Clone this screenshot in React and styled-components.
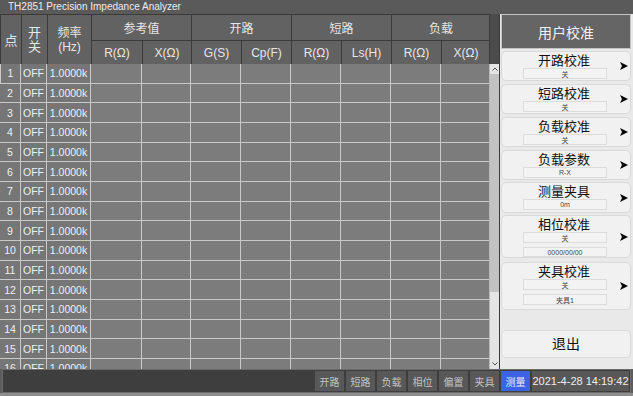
import React from 'react';
import styled, {createGlobalStyle} from 'styled-components';

const GlobalStyle = createGlobalStyle`
    body{
        margin:0;
        background:#5c5c5c;
        font-family:"Liberation Sans","Noto Sans CJK SC",sans-serif;
    }
`;

const Screen = styled.div`
    width:633px;
    height:396px;
    background:#5c5c5c;
    display:flex;
    flex-direction:column;
    overflow:hidden;
    position:relative;
`;

const TitleBar = styled.div`
    height:14px;
    line-height:14px;
    padding-left:8px;
    font-size:10px;
    color:#ececec;
    background:#5a5a5a;
`;

const Main = styled.div`
    display:flex;
    height:355px;
`;

const TableArea = styled.div`
    width:500px;
    display:flex;
    flex-direction:column;
    background:#4b4b4b;
    border-right:1px solid #3a3a3a;
    box-sizing:border-box;
`;

const cols = '21px 26px 44px 51px 49px 50px 50px 50px 50px 50px 49px';

const Header = styled.div`
    width:490px;
    height:50px;
    display:grid;
    grid-template-columns:${cols};
    grid-template-rows:26px 24px;
    background:#626262;
    border-right:1px solid #3a3a3a;
    border-top:1px solid #3a3a3a;
    box-sizing:border-box;
`;

const HeadCell = styled.div`
    grid-column:${p => p.col};
    grid-row:${p => p.row};
    display:flex;
    align-items:center;
    justify-content:center;
    flex-direction:column;
    color:#e6e6e6;
    font-size:${p => p.size || 12}px;
    line-height:${p => p.lh || 'normal'};
    border-left:1px solid #3a3a3a;
    border-bottom:1px solid #3a3a3a;
    box-sizing:border-box;
    text-align:center;
`;

const BodyWrap = styled.div`
    flex:1;
    display:flex;
    overflow:hidden;
`;

const Body = styled.div`
    width:490px;
    display:grid;
    grid-template-columns:${cols};
    grid-auto-rows:19.67px;
    align-content:start;
    overflow:hidden;
    background:#7b7b7b;
`;

const Cell = styled.div`
    background:${p => p.fixed ? '#767676' : '#7c7c7c'};
    border-right:1px solid #c9c9c9;
    border-bottom:1px solid #c9c9c9;
    box-sizing:border-box;
    color:#f0f0f0;
    font-size:10.5px;
    display:flex;
    align-items:center;
    justify-content:center;
    &:first-child{ border-left:1px solid #c9c9c9; }
`;

const ScrollBar = styled.div`
    width:9px;
    background:#e4e4e4;
    display:flex;
    flex-direction:column;
    align-items:center;
    border-left:1px solid #b8b8b8;
`;

const Arrow = styled.div`
    height:10px;
    display:flex;
    align-items:center;
    justify-content:center;
`;

const Thumb = styled.div`
    width:9px;
    height:218px;
    background:#c2c2c2;
`;

const Track = styled.div`
    flex:1;
`;

const Side = styled.div`
    width:133px;
    background:#e9e9e9;
    padding:0 2px 0 1px;
    box-sizing:border-box;
    display:flex;
    flex-direction:column;
`;

const SideTitle = styled.div`
    height:35px;
    background:#656565;
    border:1px solid #c4c4c4;
    color:#f2f2f2;
    font-size:14px;
    display:flex;
    align-items:center;
    justify-content:center;
    margin-bottom:2px;
    box-sizing:border-box;
`;

const Btn = styled.div`
    height:${p => p.h}px;
    margin-top:${p => p.mt || 0}px;
    background:#f1f1f1;
    border:1px solid #d9d9d9;
    border-radius:5px;
    box-sizing:border-box;
    display:flex;
    flex-direction:column;
    align-items:center;
    justify-content:${p => p.center ? 'center' : 'flex-start'};
    padding-top:${p => p.center ? 0 : 1}px;
    position:relative;
`;

const BtnLabel = styled.div`
    font-size:${p => p.big ? 14 : 13}px;
    color:#111;
    line-height:15px;
    margin-right:${p => p.big ? 0 : 4}px;
`;

const Value = styled.div`
    width:84px;
    height:11px;
    margin-top:${p => p.mt || 0}px;
    margin-right:2px;
    border:1px solid #dcdcdc;
    background:#f3f3f3;
    font-size:7px;
    color:#444;
    display:flex;
    align-items:center;
    justify-content:center;
    box-sizing:border-box;
`;

const Pointer = styled.svg`
    position:absolute;
    right:2px;
    top:50%;
    transform:translateY(-50%);
`;

const StatusBar = styled.div`
    height:24px;
    margin:0 2px;
    background:#3e3e3e;
    border:1px solid #6c6c6c;
    box-sizing:border-box;
    display:flex;
    align-items:center;
    justify-content:flex-end;
    gap:2px;
    padding-right:1px;
`;

const StatusBtn = styled.div`
    width:${p => p.w || 29}px;
    height:20px;
    background:${p => p.active ? '#3d63e4' : '#585858'};
    color:${p => p.active ? '#e8ecff' : p.date ? '#eeeeee' : '#c2c2c2'};
    font-size:${p => p.date ? 11 : 10}px;
    display:flex;
    align-items:center;
    justify-content:center;
`;

const BottomStrip = styled.div`
    flex:1;
    background:#8e8e8e;
`;

const rows = Array.from({length: 17}, (_, i) => i + 1);

const SideButton = ({label, values = [], h, mt}) => (
    <Btn h={h} mt={mt}>
        <BtnLabel>{label}</BtnLabel>
        {values.map((v, i) => <Value key={i} mt={i ? 4 : 0}>{v}</Value>)}
        <Pointer width="8" height="8" viewBox="0 0 8 8">
            <path d="M0 0 L8 4 L0 8 L2 4 Z" fill="#000" />
        </Pointer>
    </Btn>
);

const App = () => (
    <Screen>
        <GlobalStyle />
        <TitleBar>TH2851 Precision Impedance Analyzer</TitleBar>
        <Main>
            <TableArea>
                <Header>
                    <HeadCell col="1" row="1 / 3" size={13}>点</HeadCell>
                    <HeadCell col="2" row="1 / 3" size={13} lh="14px"><span>开</span><span>关</span></HeadCell>
                    <HeadCell col="3" row="1 / 3" lh="14px"><span>频率</span><span>(Hz)</span></HeadCell>
                    <HeadCell col="4 / 6" row="1">参考值</HeadCell>
                    <HeadCell col="6 / 8" row="1">开路</HeadCell>
                    <HeadCell col="8 / 10" row="1">短路</HeadCell>
                    <HeadCell col="10 / 12" row="1">负载</HeadCell>
                    {['R(Ω)', 'X(Ω)', 'G(S)', 'Cp(F)', 'R(Ω)', 'Ls(H)', 'R(Ω)', 'X(Ω)'].map((t, i) => (
                        <HeadCell key={i} col={String(i + 4)} row="2">{t}</HeadCell>
                    ))}
                </Header>
                <BodyWrap>
                    <Body>
                        {rows.map(n => (
                            <React.Fragment key={n}>
                                <Cell fixed>{n}</Cell>
                                <Cell fixed>OFF</Cell>
                                <Cell fixed>1.0000k</Cell>
                                {Array.from({length: 8}, (_, j) => <Cell key={j} />)}
                            </React.Fragment>
                        ))}
                    </Body>
                    <ScrollBar>
                        <Arrow>
                            <svg width="6" height="4" viewBox="0 0 6 4"><path d="M0.5 3.5 L3 1 L5.5 3.5" fill="none" stroke="#555" strokeWidth="1" /></svg>
                        </Arrow>
                        <Thumb />
                        <Track />
                        <Arrow>
                            <svg width="6" height="4" viewBox="0 0 6 4"><path d="M0.5 0.5 L3 3 L5.5 0.5" fill="none" stroke="#555" strokeWidth="1" /></svg>
                        </Arrow>
                    </ScrollBar>
                </BodyWrap>
            </TableArea>
            <Side>
                <SideTitle>用户校准</SideTitle>
                <SideButton label="开路校准" values={['关']} h={30} />
                <SideButton label="短路校准" values={['关']} h={30} mt={3} />
                <SideButton label="负载校准" values={['关']} h={30} mt={3} />
                <SideButton label="负载参数" values={['R-X']} h={30} mt={3} />
                <SideButton label="测量夹具" values={['0m']} h={31} mt={2} />
                <SideButton label="相位校准" values={['关', '0000/00/00']} h={43} mt={2} />
                <SideButton label="夹具校准" values={['关', '夹具1']} h={48} mt={4} />
                <Btn h={28} mt={20} center>
                    <BtnLabel big>退出</BtnLabel>
                </Btn>
            </Side>
        </Main>
        <StatusBar>
            {['开路', '短路', '负载', '相位', '偏置', '夹具'].map(t => <StatusBtn key={t}>{t}</StatusBtn>)}
            <StatusBtn active>测量</StatusBtn>
            <StatusBtn date w={97}>2021-4-28 14:19:42</StatusBtn>
        </StatusBar>
        <BottomStrip />
    </Screen>
);

export default App;
